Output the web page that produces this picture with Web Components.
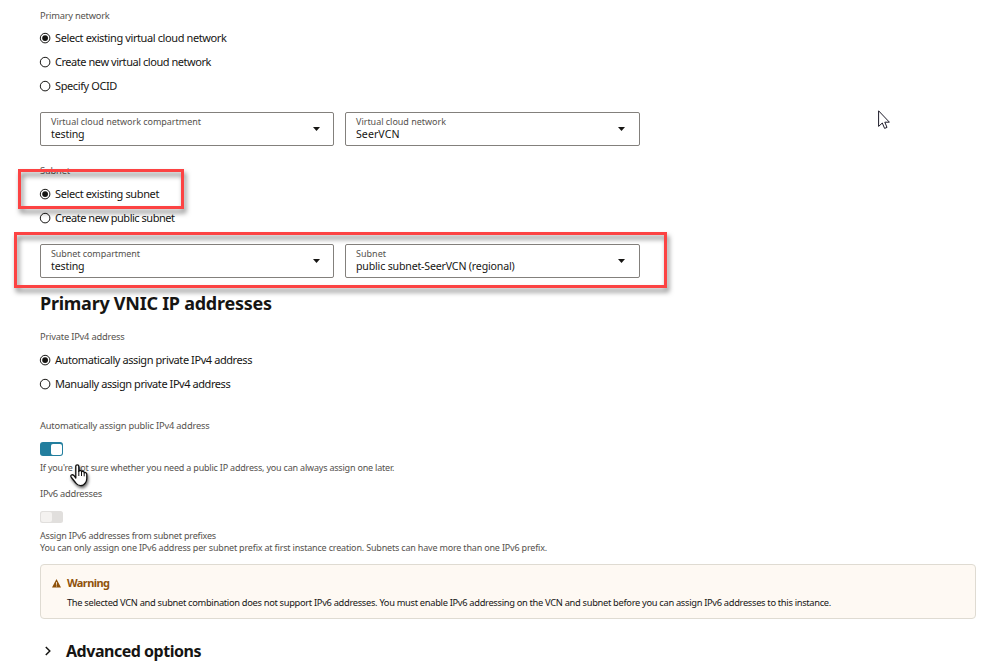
<!DOCTYPE html>
<html lang="en">
<head>
<meta charset="utf-8">
<title>Primary network</title>
<style>
html,body{margin:0;background:#fff;height:662px;overflow:hidden}
body{font-family:"Noto Sans","Open Sans",sans-serif;color:#161513;position:relative}
</style>
</head>
<body>
<network-form></network-form>
<script>
const def = (name, html, init) => {
  const t = document.createElement('template');
  t.innerHTML = html;
  customElements.define(name, class extends HTMLElement {
    connectedCallback() {
      if (this.shadowRoot) return;
      this.attachShadow({mode: 'open'}).append(t.content.cloneNode(true));
      if (init) init(this, this.shadowRoot);
    }
  });
};

/* One line of text, tracked so that it spans the width given in "w". */
def('ui-text', `<style>
:host{display:block;white-space:nowrap;font-kerning:normal}
span{display:inline-block}
</style><span><slot></slot></span>`, (el, root) => {
  const s = root.querySelector('span'), w = +el.getAttribute('w');
  const n = el.textContent.length;
  s.style.letterSpacing = ((w - s.getBoundingClientRect().width) / n).toFixed(4) + 'px';
});

def('field-label', `<style>
:host{display:block;height:12px;line-height:12px;font-size:9.3px;color:#55524e;font-weight:450}
</style><slot></slot>`);

def('radio-option', `<style>
:host{display:flex;align-items:center;height:24px;gap:5px;font-size:11px;line-height:24px}
svg{display:block;width:10px;height:10px;overflow:visible}
.dot{display:none}
:host([checked]) .dot{display:block}
</style>
<svg viewBox="0 0 10 10"><circle cx="5.1" cy="5.1" r="4.8" fill="#fff" stroke="#161513" stroke-width="1"/><circle class="dot" cx="5.1" cy="5.1" r="2.9" fill="#161513"/></svg>
<slot></slot>`);

def('select-field', `<style>
:host{display:flex;box-sizing:border-box;width:294px;height:34px;border:1px solid #83807c;border-radius:2px;padding:3px 13px 0 10px;justify-content:space-between;background:#fff}
:host([wide]){width:295px;padding-right:14px}
.l{height:12px;line-height:12px;font-size:9px;color:#55524e}
.v{height:12px;line-height:12px;font-size:10.6px}
svg{width:7px;height:4px;margin-top:11px}
</style>
<div><div class="l"><slot name="label"></slot></div><div class="v"><slot></slot></div></div>
<svg viewBox="0 0 7 4"><path d="M0 0h7L3.5 4z" fill="#161513"/></svg>`);

def('toggle-switch', `<style>
:host{display:flex;box-sizing:border-box;width:23px;height:12px;border-radius:2.5px;background:#e1dfdd;padding:1px}
i{display:block;width:11px;height:10px;background:#f4f2f0;border-radius:2px}
:host([on]){height:14px;background:#227e9e;justify-content:flex-end;border-radius:3px}
:host([on]) i{height:11px;margin-top:.5px;background:#fff}
</style><i></i>`);

def('warning-box', `<style>
:host{display:flex;box-sizing:border-box;height:55px;border:1px solid #dfdbd2;border-radius:4px;background:#fef9f3;padding:11px 0 0 11px;gap:6px}
svg{width:9px;height:9px;margin-top:3px}
.t{font-size:11px;line-height:14px;height:14px;font-weight:700;color:#8f520a}
.m{font-size:9.3px;line-height:12px;margin-top:7px}
</style>
<svg viewBox="0 0 9 9"><path d="M4.5 0L9 8.6H0z" fill="#8f520a"/><path d="M4.5 3v2.8M4.5 6.5v1" stroke="#fef9f3" stroke-width=".8"/></svg>
<div><div class="t"><slot name="title"></slot></div><div class="m"><slot></slot></div></div>`);

def('section-toggle', `<style>
:host{display:flex;align-items:center;height:24px;font-size:16px;font-weight:700;line-height:24px;padding-left:5px;gap:15px}
svg{width:6px;height:10px}
</style><svg viewBox="0 0 6 10"><path d="M.8 1L4.8 5L.8 9" fill="none" stroke="#161513" stroke-width="1.5"/></svg><slot></slot>`);

def('mark-box', `<style>
:host{position:absolute;box-sizing:border-box;border:3px solid #fc4343;filter:drop-shadow(2px 4px 2.5px rgba(0,0,0,.5))}
</style>`);

def('arrow-pointer', `<style>:host{position:absolute}svg{display:block;width:12px;height:20px}</style>
<svg viewBox="0 0 12 20"><path d="M.6 .8V16.4L4.3 13L6.6 18.4L9 17.4L6.8 12.2H11.4Z" fill="#fff" stroke="#1c1a28" stroke-width="1"/></svg>`);

def('hand-pointer', `<style>:host{position:absolute;filter:drop-shadow(1px 2px 1.5px rgba(0,0,0,.6))}svg{display:block;width:18px;height:23px}</style>
<svg viewBox="0 0 18 23"><path d="M5.8 14V2.3Q5.8 .8 7.3 .8Q8.8 .8 8.8 2.3V7.4Q9 6.3 10.2 6.4Q11.4 6.5 11.5 7.8Q12.1 7 13.1 7.3Q14.2 7.7 14.2 8.8Q15 8.2 15.9 8.8Q16.8 9.4 16.8 10.5V14.6Q16.8 17 15.4 18.8Q13.6 21.6 10.6 21.6Q7.6 21.6 5.8 19L1.4 13.5Q.2 11.8 1.4 11Q2.6 10.3 3.8 11.4Z" fill="#fff" stroke="#111" stroke-width="1.3" stroke-linejoin="round"/><path d="M8.8 7V12M11.5 8V12M14.2 9V12.3" stroke="#111" stroke-width="1"/></svg>`);

def('network-form', `<style>
:host{display:block;padding:10px 13px 0 40px}
.row{display:flex;gap:11px;margin-top:14px}
h2{margin:13px 0 15px;height:25px;line-height:25px;font-size:18px;font-weight:700}
.help{font-size:9px;line-height:12px;color:#55524e}
radio-group{display:block;margin-top:4px}
</style>
<field-label><ui-text w="69.5">Primary network</ui-text></field-label>
<radio-group>
<radio-option checked><ui-text w="171.5">Select existing virtual cloud network</ui-text></radio-option>
<radio-option><ui-text w="156">Create new virtual cloud network</ui-text></radio-option>
<radio-option><ui-text w="62">Specify OCID</ui-text></radio-option>
</radio-group>
<div class="row">
<select-field><ui-text slot="label" w="150">Virtual cloud network compartment</ui-text><ui-text w="33.5">testing</ui-text></select-field>
<select-field wide><ui-text slot="label" w="90">Virtual cloud network</ui-text><ui-text w="43.5">SeerVCN</ui-text></select-field>
</div>
<field-label style="margin-top:19px"><ui-text w="30">Subnet</ui-text></field-label>
<radio-group style="margin-top:5px">
<radio-option checked><ui-text w="104">Select existing subnet</ui-text></radio-option>
<radio-option><ui-text w="119.5">Create new public subnet</ui-text></radio-option>
</radio-group>
<div class="row">
<select-field><ui-text slot="label" w="89">Subnet compartment</ui-text><ui-text w="33.5">testing</ui-text></select-field>
<select-field wide><ui-text slot="label" w="30">Subnet</ui-text><ui-text w="158.5">public subnet-SeerVCN (regional)</ui-text></select-field>
</div>
<h2><ui-text w="231.7">Primary VNIC IP addresses</ui-text></h2>
<field-label><ui-text w="84.5">Private IPv4 address</ui-text></field-label>
<radio-group style="margin-top:5px">
<radio-option checked><ui-text w="197">Automatically assign private IPv4 address</ui-text></radio-option>
<radio-option><ui-text w="175.3">Manually assign private IPv4 address</ui-text></radio-option>
</radio-group>
<field-label style="margin-top:24px"><ui-text w="169.5">Automatically assign public IPv4 address</ui-text></field-label>
<toggle-switch on style="margin-top:10px"></toggle-switch>
<div class="help" style="margin-top:6px"><ui-text w="354.3">If you're not sure whether you need a public IP address, you can always assign one later.</ui-text></div>
<field-label style="margin-top:14px"><ui-text w="62">IPv6 addresses</ui-text></field-label>
<toggle-switch style="margin-top:11px"></toggle-switch>
<div class="help" style="margin-top:7px"><ui-text w="176">Assign IPv6 addresses from subnet prefixes</ui-text><ui-text w="507">You can only assign one IPv6 address per subnet prefix at first instance creation. Subnets can have more than one IPv6 prefix.</ui-text></div>
<warning-box style="margin-top:10px"><ui-text slot="title" w="42.5">Warning</ui-text><ui-text w="764">The selected VCN and subnet combination does not support IPv6 addresses. You must enable IPv6 addressing on the VCN and subnet before you can assign IPv6 addresses to this instance.</ui-text></warning-box>
<section-toggle style="margin-top:20px"><ui-text w="135">Advanced options</ui-text></section-toggle>
<mark-box style="left:18px;top:169px;width:166px;height:40px"></mark-box>
<mark-box style="left:14px;top:232px;width:653px;height:56px"></mark-box>
<arrow-pointer style="left:878px;top:110px"></arrow-pointer>
<hand-pointer style="left:70px;top:464px"></hand-pointer>`);
</script>
</body>
</html>
